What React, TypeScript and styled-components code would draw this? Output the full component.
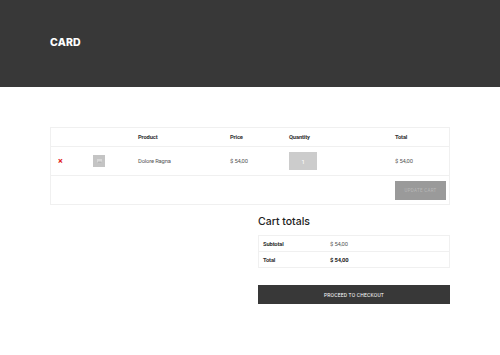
import React from 'react';
import styled, { createGlobalStyle } from 'styled-components';

const GlobalStyle = createGlobalStyle`
    html, body {
        margin: 0;
        padding: 0;
        background: #ffffff;
    }
    body {
        font-family: Roboto, 'Liberation Sans', sans-serif;
        -webkit-font-smoothing: antialiased;
    }
`;

const PageHeader = styled.div`
    height: 87px;
    background: #383838;
    display: flex;
    align-items: center;
    padding-left: 50px;
`;

const PageTitle = styled.h1`
    margin: 0;
    font-family: Inter, 'Liberation Sans', sans-serif;
    font-weight: 800;
    font-size: 10.5px;
    letter-spacing: 0.2px;
    color: #ffffff;
    transform: translateY(-1px);
`;

const Content = styled.div`
    width: 400px;
    margin: 0 auto;
    padding-top: 40px;
`;

const CartTable = styled.div`
    border: 1px solid #f0f0f0;
    display: grid;
    grid-template-columns: 35px 45px 92px 59px 106px 1fr;
`;

const Cell = styled.div<{ $head?: boolean; $h: number }>`
    height: ${p => p.$h}px;
    display: flex;
    align-items: center;
    padding-left: 7px;
    border-bottom: 1px solid #f0f0f0;
    font-size: 5.8px;
    font-weight: ${p => (p.$head ? 700 : 400)};
    color: ${p => (p.$head ? '#333333' : '#555555')};
    letter-spacing: -0.15px;
`;

const RemoveMark = styled.span`
    color: #e02020;
    font-size: 9px;
    font-weight: 700;
    line-height: 1;
`;

const Thumb = styled.div`
    width: 12px;
    height: 12px;
    background: #c4c4c4;
    display: flex;
    align-items: center;
    justify-content: center;
`;

const QtyBox = styled.div`
    width: 28px;
    height: 18px;
    background: #cccccc;
    color: #ffffff;
    font-size: 6px;
    display: flex;
    align-items: center;
    justify-content: center;
`;

const ActionRow = styled.div`
    grid-column: 1 / -1;
    height: 28px;
    display: flex;
    align-items: center;
    justify-content: flex-end;
    padding-right: 3px;
`;

const UpdateButton = styled.button`
    width: 51px;
    height: 19px;
    border: none;
    background: #9a9a9a;
    color: #b8b8b8;
    font-family: Roboto, 'Liberation Sans', sans-serif;
    font-size: 4.5px;
    letter-spacing: 0.3px;
    padding: 0;
`;

const TotalsSection = styled.div`
    width: 192px;
    margin-left: 208px;
    padding-top: 9px;
`;

const TotalsTitle = styled.h2`
    margin: 0 0 5px 0;
    font-family: Inter, 'Liberation Sans', sans-serif;
    font-weight: 500;
    font-size: 10.5px;
    color: #222222;
    line-height: 16px;
`;

const TotalsTable = styled.div`
    border: 1px solid #f0f0f0;
`;

const TotalsRow = styled.div<{ $last?: boolean }>`
    height: 15px;
    display: grid;
    grid-template-columns: 67px 1fr;
    align-items: center;
    padding-left: 4px;
    border-bottom: ${p => (p.$last ? 'none' : '1px solid #f0f0f0')};
    font-size: 5.8px;
    letter-spacing: -0.15px;
    color: #333333;
`;

const TotalsLabel = styled.span`
    font-weight: 700;
`;

const TotalsValue = styled.span<{ $bold?: boolean }>`
    font-weight: ${p => (p.$bold ? 700 : 400)};
    color: ${p => (p.$bold ? '#222222' : '#555555')};
`;

const CheckoutButton = styled.button`
    margin-top: 17px;
    width: 100%;
    height: 19px;
    border: none;
    background: #383838;
    color: #ffffff;
    font-family: Roboto, 'Liberation Sans', sans-serif;
    font-size: 5px;
    letter-spacing: 0.2px;
    padding: 0;
`;

const ThumbIcon = () => (
    <svg width="5" height="4" viewBox="0 0 5 4">
        <rect x="0" y="0" width="5" height="4" fill="#d8d8d8" />
        <path d="M0 4 L2 2 L3 3 L4 2 L5 4 Z" fill="#b8b8b8" />
    </svg>
);

const App = () => {
    return (
        <>
            <GlobalStyle />
            <PageHeader>
                <PageTitle>CARD</PageTitle>
            </PageHeader>
            <Content>
                <CartTable>
                    <Cell $head $h={18}></Cell>
                    <Cell $head $h={18}></Cell>
                    <Cell $head $h={18}>Product</Cell>
                    <Cell $head $h={18}>Price</Cell>
                    <Cell $head $h={18}>Quantity</Cell>
                    <Cell $head $h={18}>Total</Cell>

                    <Cell $h={28}><RemoveMark>×</RemoveMark></Cell>
                    <Cell $h={28}><Thumb><ThumbIcon /></Thumb></Cell>
                    <Cell $h={28}>Dolore Ragna</Cell>
                    <Cell $h={28}>$ 54,00</Cell>
                    <Cell $h={28}><QtyBox>1</QtyBox></Cell>
                    <Cell $h={28}>$ 54,00</Cell>

                    <ActionRow>
                        <UpdateButton>UPDATE CART</UpdateButton>
                    </ActionRow>
                </CartTable>
                <TotalsSection>
                    <TotalsTitle>Cart totals</TotalsTitle>
                    <TotalsTable>
                        <TotalsRow>
                            <TotalsLabel>Subtotal</TotalsLabel>
                            <TotalsValue>$ 54,00</TotalsValue>
                        </TotalsRow>
                        <TotalsRow $last>
                            <TotalsLabel>Total</TotalsLabel>
                            <TotalsValue $bold>$ 54,00</TotalsValue>
                        </TotalsRow>
                    </TotalsTable>
                    <CheckoutButton>PROCEED TO CHECKOUT</CheckoutButton>
                </TotalsSection>
            </Content>
        </>
    );
};

export default App;
